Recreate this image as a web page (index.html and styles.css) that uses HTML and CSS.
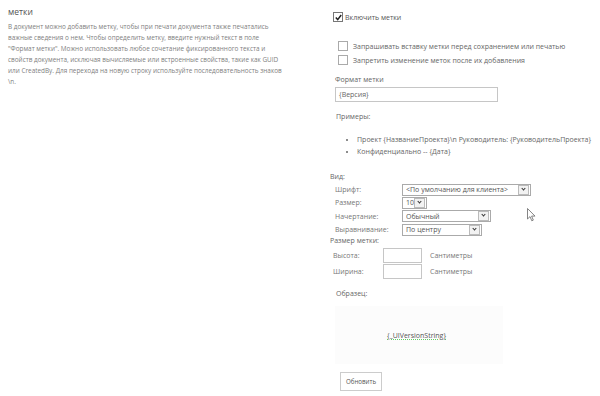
FILE: index.html
```html
<!DOCTYPE html>
<html lang="ru">
<head>
  <meta charset="UTF-8">
  <title>Метки</title>
  <link rel="stylesheet" href="styles.css">
</head>
<body>
  <div class="pagina">

    <!-- Описание раздела -->
    <div class="descripcion">
      <h3>метки</h3>
      <p>В документ можно добавить метку, чтобы при печати документа также печатались важные сведения о нем. Чтобы определить метку, введите нужный текст в поле "Формат метки". Можно использовать любое сочетание фиксированного текста и свойств документа, исключая вычисляемые или встроенные свойства, такие как GUID или CreatedBy. Для перехода на новую строку используйте последовательность знаков \n.</p>
    </div>

    <!-- Настройки -->
    <div class="ajustes">
      <div class="check principal">
        <span class="caja marcada">
          <svg width="7" height="7" viewBox="0 0 7 7"><path d="M0.8 3.6 L2.7 5.6 L6.2 1" fill="none" stroke="#222" stroke-width="1.5"/></svg>
        </span>
        Включить метки
      </div>

      <div class="opciones">
        <div class="check"><span class="caja"></span>Запрашивать вставку метки перед сохранением или печатью</div>
        <div class="check"><span class="caja"></span>Запретить изменение меток после их добавления</div>
      </div>

      <div class="formato">
        <div class="etiqueta">Формат метки</div>
        <div class="campo ancho">{Версия}</div>
      </div>

      <div class="ejemplos">
        <div class="etiqueta">Примеры:</div>
        <ul>
          <li>Проект {НазваниеПроекта}\n Руководитель: {РуководительПроекта}</li>
          <li>Конфиденциально -- {Дата}</li>
        </ul>
      </div>

      <div class="vista">
        <div class="titulo">Вид:</div>
        <div class="fila">
          <span class="nombre">Шрифт:</span>
          <span class="lista l-fuente"><span class="valor">&lt;По умолчанию для клиента&gt;</span><span class="flecha"></span></span>
        </div>
        <div class="fila">
          <span class="nombre">Размер:</span>
          <span class="lista l-talle"><span class="valor">10</span><span class="flecha"></span></span>
        </div>
        <div class="fila">
          <span class="nombre">Начертание:</span>
          <span class="lista l-estilo"><span class="valor">Обычный</span><span class="flecha"></span></span>
        </div>
        <div class="fila">
          <span class="nombre">Выравнивание:</span>
          <span class="lista l-alinear"><span class="valor">По центру</span><span class="flecha"></span></span>
        </div>

        <div class="titulo tamano">Размер метки:</div>
        <div class="medida">
          <span class="nombre">Высота:</span>
          <span class="campo corto"></span>
          <span>Сантиметры</span>
        </div>
        <div class="medida">
          <span class="nombre">Ширина:</span>
          <span class="campo corto"></span>
          <span>Сантиметры</span>
        </div>
      </div>

      <div class="muestra">
        <div class="titulo">Образец:</div>
        <div class="vista-previa"><span class="texto-muestra">{_UIVersionString}</span></div>
        <button class="boton">Обновить</button>
      </div>

      <!-- puntero del ratón -->
      <svg class="puntero" width="9" height="14" viewBox="0 0 9 14"><path d="M0.5 0.5 L0.5 11 L3 8.6 L4.8 12.8 L6.3 12.1 L4.6 8.1 L8 8.1 Z" fill="#fff" stroke="#666" stroke-width="0.8"/></svg>
    </div>

  </div>
</body>
</html>
```

FILE: styles.css
```css
body {
  margin: 0;
  font-family: "Open Sans", "Noto Sans", sans-serif;
  color: #555;
  background-color: #fff;
}
.pagina {
  display: flex;
  position: relative;
}

/* Описание */
.descripcion {
  width: 295px;
  padding: 6px 0 0 8px;
  box-sizing: border-box;
}
.descripcion h3 {
  margin: 0;
  font-size: 8.5px;
  font-weight: normal;
  line-height: 12px;
  color: #555;
}
.descripcion p {
  margin: 3px 0 0;
  width: 278px;
  font-size: 6.4px;
  line-height: 11px;
  color: #808080;
}

/* Настройки */
.ajustes {
  margin-left: 38px;
  padding-top: 11px;
  font-size: 7px;
  width: 262px;
}
.check {
  display: flex;
  align-items: center;
  height: 14px;
  white-space: nowrap;
}
.caja {
  width: 8px;
  height: 8px;
  border: 1px solid #aaa;
  background: #fff;
  margin-right: 5px;
  display: flex;
  align-items: center;
  justify-content: center;
  flex: none;
}
.caja.marcada {
  border-color: #777;
  margin-right: 2px;
}
.principal {
  height: 12px;
  color: #555;
}
.opciones {
  margin: 16px 0 0 5px;
}
.opciones .check {
  color: #666;
}

.formato {
  margin: 7px 0 0 2px;
}
.etiqueta {
  line-height: 12px;
  color: #666;
}
.campo {
  border: 1px solid #c6c6c6;
  background: #fff;
  box-sizing: border-box;
}
.campo.ancho {
  width: 163px;
  height: 15px;
  line-height: 13px;
  padding-left: 3px;
  margin-top: 1px;
  color: #666;
}

.ejemplos {
  margin: 9px 0 0 3px;
}
.ejemplos ul {
  margin: 11px 0 0;
  padding-left: 21px;
  color: #666;
}
.ejemplos li {
  line-height: 12px;
  white-space: nowrap;
}

.vista {
  margin-top: 13px;
  margin-left: -3px;
}
.titulo {
  line-height: 12px;
  font-size: 7px;
  color: #666;
}
.fila {
  display: flex;
  align-items: center;
  height: 13.3px;
  margin-left: 5px;
}
.nombre {
  width: 67px;
  flex: none;
  color: #777;
}
.lista {
  display: flex;
  align-items: center;
  flex: none;
  height: 12px;
  border: 1px solid #aaa;
  box-sizing: border-box;
  padding-left: 3px;
  font-size: 7px;
  color: #555;
  overflow: hidden;
}
.valor {
  flex: 1;
  min-width: 0;
  white-space: nowrap;
  overflow: hidden;
}
.flecha {
  width: 9px;
  height: 8px;
  border: 1px solid #bbb;
  background: #f2f2f2;
  margin-right: 1px;
  position: relative;
  flex: none;
}
.flecha::after {
  content: "";
  position: absolute;
  left: 2.5px;
  top: 1px;
  width: 2px;
  height: 2px;
  border-right: 1px solid #333;
  border-bottom: 1px solid #333;
  transform: rotate(45deg);
}
.l-fuente { width: 129px; }
.l-talle { width: 25px; }
.l-estilo { width: 89px; }
.l-alinear { width: 80px; }

.tamano {
  margin-top: -1px;
}
.medida {
  display: flex;
  align-items: center;
  height: 16px;
  margin-left: 3px;
  color: #777;
}
.medida .nombre {
  width: 50px;
}
.campo.corto {
  width: 39px;
  height: 15px;
  margin-right: 8px;
}

.muestra {
  margin-top: 9px;
}
.muestra .titulo {
  margin-left: 3px;
}
.vista-previa {
  height: 58px;
  width: 168px;
  margin: 6px 0 0 2px;
  background: #fcfcfc;
  display: flex;
  align-items: center;
  padding-left: 52px;
  box-sizing: border-box;
}
.texto-muestra {
  font-size: 7px;
  color: #555;
  text-decoration: underline dotted #6c6;
}
.boton {
  margin: 8px 0 0 7px;
  width: 42px;
  height: 19px;
  font-family: inherit;
  font-size: 6.2px;
  color: #555;
  background: #fff;
  border: 1px solid #ccc;
  padding: 0;
}

.puntero {
  position: absolute;
  left: 527px;
  top: 208px;
}
```
